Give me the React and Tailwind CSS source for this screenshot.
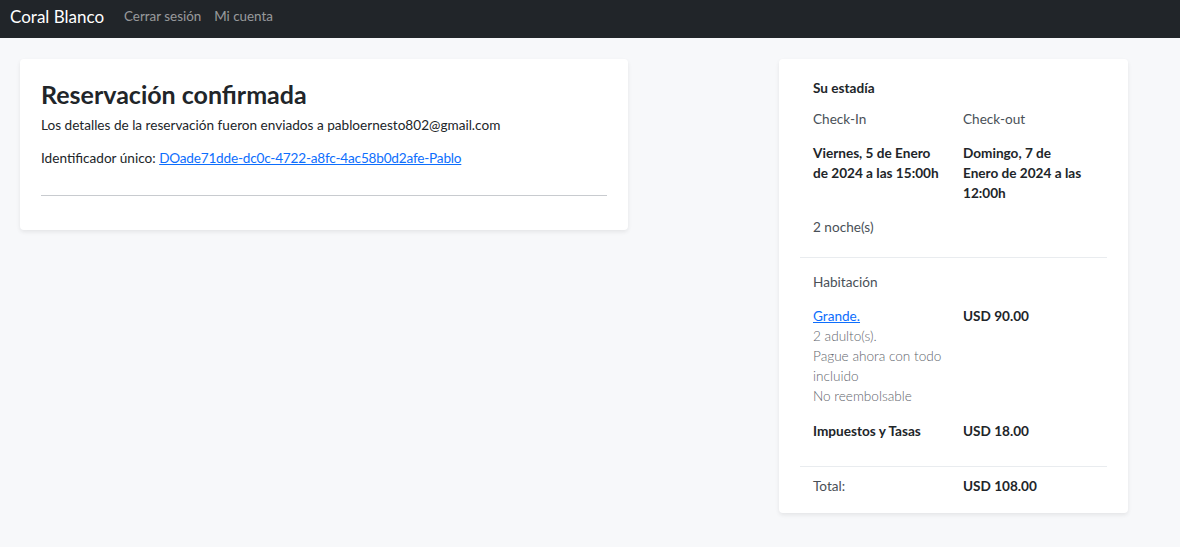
export default function App() {
  const font = { fontFamily: "Lato, 'Open Sans', sans-serif" };
  return (
    <div className="min-h-[547px] bg-[#f7f8fa] text-[#212529]" style={font}>
      <nav className="h-[38px] bg-[#212529] flex items-center pl-[10px]">
        <span className="text-white text-[17px] leading-none mr-[20px] -mt-[5px]">Coral Blanco</span>
        <span className="text-[rgba(255,255,255,0.55)] text-[13.4px] leading-none mr-[13px] -mt-[5px]">Cerrar sesión</span>
        <span className="text-[rgba(255,255,255,0.55)] text-[13.4px] leading-none -mt-[5px]">Mi cuenta</span>
      </nav>
      <div className="flex items-start justify-between pl-[20px] pr-[52px] pt-[21px]">
        <div className="w-[608px] bg-white rounded-[4px] shadow-[0_2px_4px_rgba(0,0,0,0.08)] px-[21px] pt-[20px] pb-[34px]">
          <h1 className="text-[25px] leading-[30px] font-bold">Reservación confirmada</h1>
          <p className="text-[13.6px] leading-[20px] mt-[6px]">Los detalles de la reservación fueron enviados a pabloernesto802@gmail.com</p>
          <p className="text-[13.6px] leading-[20px] mt-[13px]">
            Identificador único: <a href="#" className="text-[#0d6efd] underline tracking-[-0.2px]">DOade71dde-dc0c-4722-a8fc-4ac58b0d2afe-Pablo</a>
          </p>
          <hr className="mt-[27px] border-t border-[#c8cbcf]" />
        </div>
        <div className="w-[349px] bg-white rounded-[4px] shadow-[0_2px_4px_rgba(0,0,0,0.08)] px-[21px] pt-[19px] pb-[17px] text-[13.6px] leading-[20px]">
          <div className="px-[13px]">
            <div className="font-bold">Su estadía</div>
            <div className="grid grid-cols-[150px_130px] mt-[11px] text-[#495057]">
              <div>Check-In</div>
              <div>Check-out</div>
            </div>
            <div className="grid grid-cols-[150px_130px] mt-[14px] font-bold">
              <div className="max-w-[130px]">Viernes, 5 de Enero de 2024 a las 15:00h</div>
              <div className="max-w-[124px]">Domingo, 7 de Enero de 2024 a las 12:00h</div>
            </div>
            <div className="mt-[14px] text-[#495057]">2 noche(s)</div>
          </div>
          <hr className="mt-[20px] border-t border-[#e9ecef]" />
          <div className="px-[13px]">
            <div className="mt-[14px] text-[#495057]">Habitación</div>
            <div className="grid grid-cols-[150px_1fr] mt-[14px]">
              <div className="font-light text-[#5f666d]">
                <a href="#" className="text-[#0d6efd] underline font-normal">Grande.</a>
                <div>2 adulto(s).</div>
                <div className="pr-[10px]">Pague ahora con todo incluido</div>
                <div>No reembolsable</div>
              </div>
              <div className="font-bold">USD 90.00</div>
            </div>
            <div className="grid grid-cols-[150px_1fr] mt-[15px] font-bold">
              <div>Impuestos y Tasas</div>
              <div>USD 18.00</div>
            </div>
          </div>
          <hr className="mt-[25px] border-t border-[#e9ecef]" />
          <div className="px-[13px] grid grid-cols-[150px_1fr] mt-[9px]">
            <div className="text-[#495057]">Total:</div>
            <div className="font-bold">USD 108.00</div>
          </div>
        </div>
      </div>
    </div>
  );
}
